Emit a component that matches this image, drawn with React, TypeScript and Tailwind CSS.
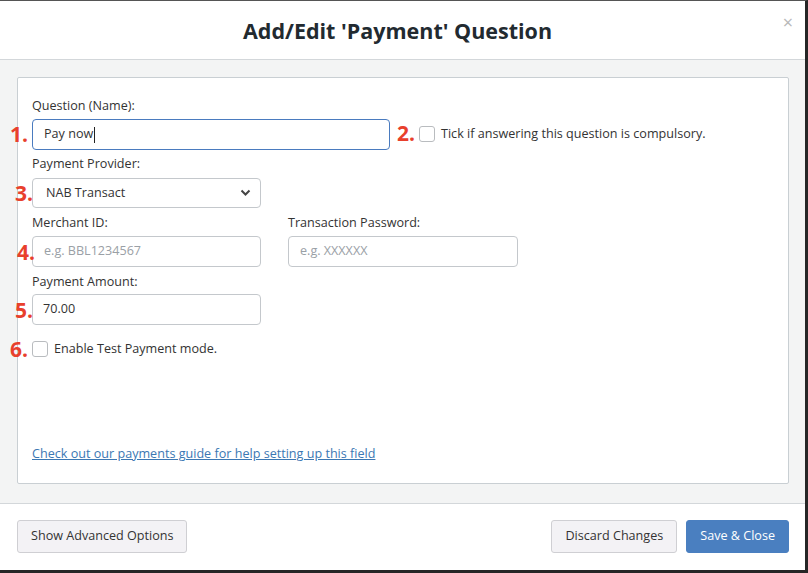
import React from "react";

const font = { fontFamily: '"Open Sans", "Liberation Sans", sans-serif' };

function Num({ n, className }: { n: string; className: string }) {
  return (
    <span
      className={`absolute text-[21px] font-bold leading-none text-[#e8402c] ${className}`}
    >
      {n}
    </span>
  );
}

function Label({ children, className = "" }: { children: React.ReactNode; className?: string }) {
  return <div className={`text-[12.6px] leading-[18px] text-[#333] ${className}`}>{children}</div>;
}

function Box({ className = "" }: { className?: string }) {
  return (
    <span
      className={`inline-block h-[16px] w-[16px] rounded-[3px] border border-[#b9bcbf] bg-white ${className}`}
    />
  );
}

export default function App() {
  return (
    <div
      className="flex h-[573px] w-[808px] flex-col overflow-hidden border-t border-r-[3px] border-b-[3px] border-t-[#555] border-r-[#262626] border-b-[#262626] bg-white"
      style={font}
    >
      {/* Header */}
      <div className="relative flex h-[59px] shrink-0 items-center justify-center border-b border-[#d3d7da] pr-[10px]">
        <h1 className="pt-[3px] text-[21.5px] font-bold text-[#222a30]">Add/Edit 'Payment' Question</h1>
        <span className="absolute right-[12px] top-[12px] text-[18px] leading-none text-[#b8b8b8]">×</span>
      </div>

      {/* Body */}
      <div className="shrink-0 bg-[#f3f4f4] pl-[17px] pr-[16px] pt-[17px] pb-[19px]">
        <div className="h-[407px] rounded-[2px] border border-[#c9cfd3] bg-white px-[14px] pt-[19px]">
          <Label>Question (Name):</Label>
          <div className="mt-[4px] flex items-center">
            <div className="relative">
              <Num n="1." className="-left-[22px] top-[5px]" />
              <div className="flex h-[31px] w-[358px] items-center rounded-[4px] border border-[#4a7bbf] px-[11px] text-[12.6px] text-[#333]">
                Pay now<span className="ml-[1px] h-[16px] w-px bg-[#222]" />
              </div>
            </div>
            <div className="relative ml-[29px] flex items-center">
              <Num n="2." className="-left-[22px] top-[-2px]" />
              <Box />
              <span className="ml-[6px] text-[12.6px] text-[#333]">Tick if answering this question is compulsory.</span>
            </div>
          </div>

          <Label className="mt-[5px]">Payment Provider:</Label>
          <div className="relative mt-[5px]">
            <Num n="3." className="-left-[17px] top-[5px]" />
            <div className="flex h-[30px] w-[229px] items-center justify-between rounded-[4px] border border-[#c4c8cc] pl-[13px] pr-[9px] text-[12.6px] text-[#333]">
              NAB Transact
              <svg width="11" height="8" viewBox="0 0 11 8">
                <path d="M1.5 1.5 L5.5 5.5 L9.5 1.5" fill="none" stroke="#444" strokeWidth="2" />
              </svg>
            </div>
          </div>

          <div className="mt-[6px] flex gap-[27px]">
            <div>
              <Label>Merchant ID:</Label>
              <div className="relative mt-[4px]">
                <Num n="4." className="-left-[15px] top-[6px]" />
                <div className="flex h-[31px] w-[229px] items-center rounded-[4px] border border-[#c4c8cc] px-[11px] text-[12.6px] text-[#9aa0a6]">
                  e.g. BBL1234567
                </div>
              </div>
            </div>
            <div>
              <Label>Transaction Password:</Label>
              <div className="mt-[4px] flex h-[31px] w-[230px] items-center rounded-[4px] border border-[#c4c8cc] px-[11px] text-[12.6px] text-[#9aa0a6]">
                e.g. XXXXXX
              </div>
            </div>
          </div>

          <Label className="mt-[6px]">Payment Amount:</Label>
          <div className="relative mt-[3px]">
            <Num n="5." className="-left-[17px] top-[6px]" />
            <div className="flex h-[31px] w-[229px] items-center rounded-[4px] border border-[#c4c8cc] px-[10px] text-[12.6px] text-[#333]">
              70.00
            </div>
          </div>

          <div className="relative mt-[15px] flex items-center">
            <Num n="6." className="-left-[22px] top-[-1px]" />
            <Box />
            <span className="ml-[6px] text-[12.6px] text-[#333]">Enable Test Payment mode.</span>
          </div>

          <a href="#" className="mt-[86px] block text-[12.6px] leading-[18px] text-[#3b77b3] underline">
            Check out our payments guide for help setting up this field
          </a>
        </div>
      </div>

      {/* Footer */}
      <div className="flex flex-1 items-center justify-between border-t border-[#d3d7da] pl-[17px] pr-[16px] pb-[1px]">
        <button className="h-[33px] rounded-[3px] border border-[#cfcfd3] bg-[#f3f2f5] px-[13px] text-[12.6px] text-[#333]">
          Show Advanced Options
        </button>
        <div className="flex gap-[9px]">
          <button className="h-[33px] rounded-[3px] border border-[#cfcfd3] bg-[#f3f2f5] px-[13px] text-[12.6px] text-[#333]">
            Discard Changes
          </button>
          <button className="h-[33px] rounded-[3px] border border-[#4a7fc0] bg-[#4a7fc0] px-[13px] text-[12.6px] text-white">
            Save &amp; Close
          </button>
        </div>
      </div>
    </div>
  );
}
